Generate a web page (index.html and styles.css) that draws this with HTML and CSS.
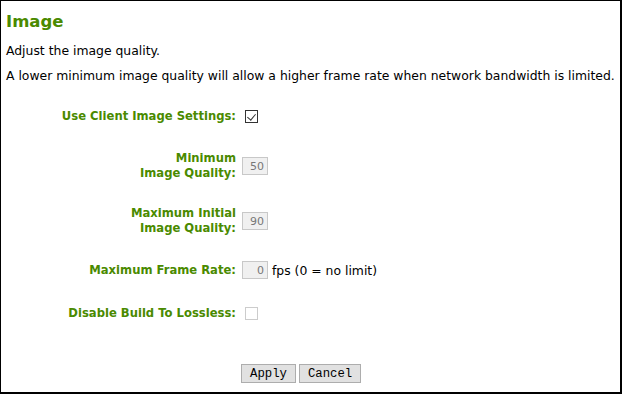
FILE: index.html
```html
<!DOCTYPE html>
<html lang="en">
<head>
    <meta charset="UTF-8">
    <title>Image</title>
    <link rel="stylesheet" href="styles.css">
</head>
<body>
    <div class="panel">
        <h1 class="title">Image</h1>
        <p class="note">Adjust the image quality.</p>
        <p class="note">A lower minimum image quality will allow a higher frame rate when network bandwidth is limited.</p>

        <form class="settings">
            <div class="row first-row">
                <label class="field-label">Use Client Image Settings:</label>
                <div class="field"><span class="check checked"></span></div>
            </div>

            <div class="row">
                <label class="field-label">Minimum<br>Image Quality:</label>
                <div class="field"><input class="num" type="text" value="50" disabled></div>
            </div>

            <div class="row">
                <label class="field-label">Maximum Initial<br>Image Quality:</label>
                <div class="field"><input class="num" type="text" value="90" disabled></div>
            </div>

            <div class="row">
                <label class="field-label">Maximum Frame Rate:</label>
                <div class="field"><input class="num" type="text" value="0" disabled><span class="hint">fps (0 = no limit)</span></div>
            </div>

            <div class="row">
                <label class="field-label">Disable Build To Lossless:</label>
                <div class="field"><span class="check off"></span></div>
            </div>

            <div class="row actions-row">
                <span></span>
                <div class="actions">
                    <button type="button" class="btn">Apply</button>
                    <button type="button" class="btn">Cancel</button>
                </div>
            </div>
        </form>
    </div>
</body>
</html>
```

FILE: styles.css
```css
:root {
    --green: #4a8a00;
    --text: #000;
}

* {
    box-sizing: border-box;
    margin: 0;
    padding: 0;
}

html, body {
    width: 622px;
    height: 394px;
    background: #fff;
}

body {
    font-family: 'DejaVu Sans', Verdana, sans-serif;
    font-size: 12.4px;
    color: var(--text);
}

.panel {
    height: 394px;
    border-style: solid;
    border-color: #000;
    border-width: 1px 2px 2px 1px;
    padding: 10px 5px 0 5px;
}

.title {
    font-size: 16.5px;
    font-weight: bold;
    color: var(--green);
    line-height: 22px;
    margin-bottom: 10px;
}

.note {
    line-height: 16px;
    margin-bottom: 9px;
}

.settings {
    display: flex;
    flex-direction: column;
    gap: 25px;
    margin-top: 23px;
}

.first-row {
    margin-bottom: 1px;
}

.row {
    display: grid;
    grid-template-columns: 230px auto;
    column-gap: 6px;
    align-items: center;
    min-height: 18px;
}

.field-label {
    text-align: right;
    font-weight: bold;
    font-size: 11.6px;
    color: var(--green);
    line-height: 15px;
}

.field {
    display: flex;
    align-items: center;
    gap: 4px;
}

.num {
    width: 26px;
    height: 18px;
    border: 1px solid #c8c8c8;
    background: #f0f0f0;
    color: #777;
    text-align: right;
    font-family: inherit;
    font-size: 11px;
    padding: 0 3px;
}

.check {
    display: inline-block;
    width: 13px;
    height: 13px;
    margin-left: 3px;
    border: 1px solid #333;
    position: relative;
}

.check.checked::after {
    content: "";
    position: absolute;
    left: 3px;
    top: 1px;
    width: 4px;
    height: 7px;
    border: solid #333;
    border-width: 0 1px 1px 0;
    transform: rotate(40deg);
}

.check.off {
    border-color: #ccc;
}

.actions-row {
    margin-top: 17px;
}

.actions {
    display: flex;
    gap: 3px;
    margin-left: -1px;
}

.btn {
    font-family: 'Liberation Mono', 'Courier New', monospace;
    font-size: 12.3px;
    background: #e1e1e1;
    border: 1px solid #adadad;
    height: 19px;
    padding: 0 8px;
    color: #000;
}
```
